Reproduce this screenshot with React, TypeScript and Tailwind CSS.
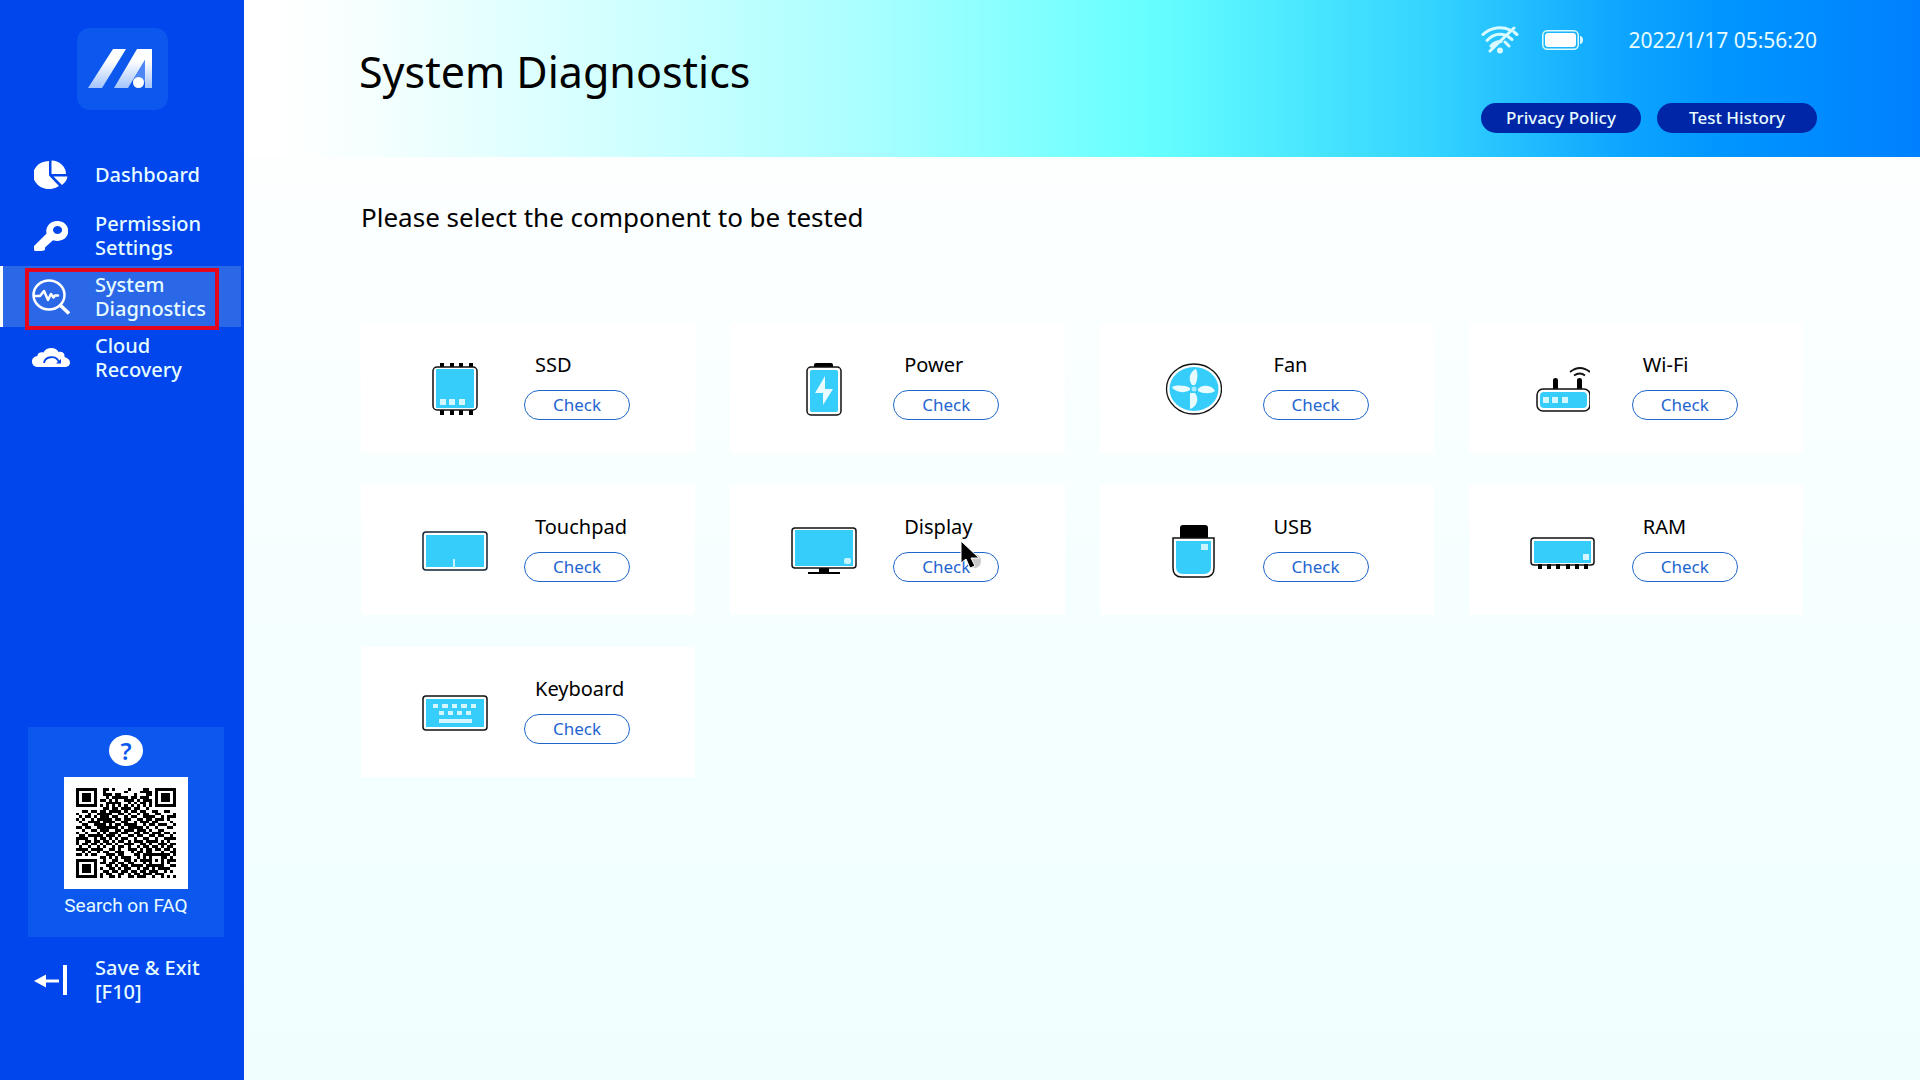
import type { ReactNode } from "react";

const qrRows = [
  "111111100110100001000011001111111",
  "100000100100000010000111101000001",
  "101110100111011000010001101011101",
  "101110100010111110110111001011101",
  "101110101101010011101011101011101",
  "100000100011111001010110101000001",
  "111111101010101010101010101111111",
  "000000000110110111011001000000000",
  "001101101101111010110110011001100",
  "100010011111001101001011001100001",
  "010110101110110010110011110010111",
  "101001011111011011001101101110100",
  "010011110111100110010111011000010",
  "001100111101011011110010110111001",
  "110110011111110101111101001000110",
  "001001101110011011101110100110000",
  "100100010101110110011011011101101",
  "011011111011101001101100110110010",
  "111100101101010110010011001001111",
  "100110110110101101011101111010100",
  "101101101011010011100110100111011",
  "010010010100101101001011011010110",
  "111101111001101001110101101101101",
  "001010010110011100101101100010011",
  "110101100011101100011011111111101",
  "000000001101010111001010100011010",
  "111111100100110011010111101010111",
  "100000101101101101100010100010100",
  "101110100011010110111101111110011",
  "101110101001101011001011010111100",
  "101110100110110110110110111001010",
  "100000101011001101011011101110000",
  "111111101001101001101110010010101",
];

const qrPath = qrRows
  .map((row, y) =>
    row
      .split("")
      .map((cell, x) => (cell === "1" ? `M${x} ${y}h1v1h-1z` : ""))
      .join("")
  )
  .join("");

const BLUE = "#36cdfb";

function Logo() {
  return (
    <svg width="91" height="82" viewBox="0 0 91 82" aria-label="MyASUS">
      <defs>
        <linearGradient id="logo" x1="0" y1="0" x2="0" y2="1">
          <stop offset="0.3" stopColor="#ffffff" />
          <stop offset="1" stopColor="#a3c4fb" />
        </linearGradient>
      </defs>
      <rect width="91" height="82" rx="13" fill="#0c58ef" />
      <path d="M36 21h13L25 60H11z" fill="url(#logo)" />
      <path d="M60 21h15v39h-7V32L51 60H37z" fill="url(#logo)" />
      <path d="M68 32v22L56 52z" fill="#4f86f5" />
      <circle cx="61.500" cy="54.500" r="5.500" fill="#fff" />
    </svg>
  );
}

function DashboardIcon() {
  return (
    <svg width="34" height="30" viewBox="0 0 34 30" fill="#fff">
      <path d="M15 1v14.500L25 26A16 14 0 1 1 15 1z" />
      <path d="M17.500 0.500C26 0.500 32 7 32 14H17.500z" />
      <path d="M19.500 16.500H33.500Q33 21 28 25z" />
    </svg>
  );
}

function KeyIcon() {
  return (
    <svg width="34" height="30" viewBox="0 0 34 30" fill="#fff">
      <path
        fillRule="evenodd"
        d="M23 0a11 10 0 1 1-4 19.200L11 26.500V28q0 1-1 1.500L7 30H1.500Q0 30 0 28.500V25L12.600 12.500A11 10 0 0 1 23 0zM23.500 5a4.500 4 0 1 0 .1 0z"
      />
    </svg>
  );
}

function DiagnosticsIcon() {
  return (
    <svg width="38" height="36" viewBox="0 0 38 36" fill="none" stroke="#fff" strokeWidth="2.500">
      <ellipse cx="17" cy="16" rx="15.500" ry="14.500" />
      <path d="M28 26l9 8.500" strokeWidth="3.500" />
      <path d="M3 17h5l4-5 4 9 3-6 2.500 3.500 1.500-2h3" strokeLinejoin="round" strokeLinecap="round" />
    </svg>
  );
}

function CloudIcon() {
  return (
    <svg width="38" height="20" viewBox="0 0 38 20">
      <path
        d="M6 19C2 19 0 16.500 0 13.500 0 10 2.500 8.500 5.500 8 5 5 9 3.500 11.500 4.500 14-1 24-1.500 26.500 4c4-1 6.500 1.500 6 5 3.500 1 5.500 3 5.500 5.500C38 17.500 35.500 19 33 19z"
        fill="#fff"
      />
      <path d="M12 15c1-7 12-8 15-1" fill="none" stroke="#0647ea" strokeWidth="1.800" />
      <path d="M29 11v4.500h-5z" fill="#0647ea" />
    </svg>
  );
}

function ExitIcon() {
  return (
    <svg width="34" height="30" viewBox="0 0 34 30" fill="#fff">
      <path d="M0 16l12-6.500v5h13v3H12v5z" />
      <path d="M29 0h4v30h-4z" />
    </svg>
  );
}

function WifiOffIcon() {
  return (
    <svg width="38" height="28" viewBox="0 0 38 28" fill="none" stroke="#d9fbff" strokeWidth="3" strokeLinecap="round">
      <path d="M2 8.500C10 1 21 0 29 4" />
      <path d="M6 14.500C11 9 18 7.500 24 9" />
      <path d="M10 20c3-3.500 6.500-4.500 10-4.500M9 25L33 2M33 6l3 2.500M27 10.500l4 3M24 16l4 4" />
      <circle cx="19" cy="24.500" r="1.500" fill="#d9fbff" />
    </svg>
  );
}

function BatteryIcon() {
  return (
    <svg width="42" height="20" viewBox="0 0 42 20">
      <rect x="0.750" y="0.750" width="35.500" height="18.500" rx="4.500" fill="none" stroke="#d9fbff" strokeWidth="1.500" />
      <rect x="3" y="3" width="31" height="14" rx="3" fill="#fff" />
      <path d="M38 6c4 0 4 8 0 8z" fill="#d9fbff" />
    </svg>
  );
}

function SsdIcon() {
  return (
    <svg width="46" height="52" viewBox="0 0 46 52">
      <path d="M8 0h4v52H8zM18 0h4v52h-4zM27 0h4v52h-4zM37 0h4v52h-4z" />
      <rect x="1" y="4" width="44" height="43" rx="4" fill="#fff" stroke="#111" strokeWidth="1.500" />
      <rect x="4" y="6" width="38" height="39" rx="1" fill={BLUE} />
      <path d="M8 36h6v6H8zM17 36h6v6h-6zM27 36h6v6h-6z" fill="#d3f6ff" />
    </svg>
  );
}

function PowerIcon() {
  return (
    <svg width="36" height="54" viewBox="0 0 36 54">
      <path d="M8 6V3q0-2 2-2h15q2 0 2 2v3z" />
      <rect x="1" y="5" width="34" height="48" rx="4" fill="#fff" stroke="#111" strokeWidth="1.500" />
      <rect x="4" y="8" width="28" height="42" rx="2" fill={BLUE} />
      <path d="M19 14v13h8L17 43V31H9z" fill="#e8fbff" />
    </svg>
  );
}

function FanIcon() {
  return (
    <svg width="58" height="52" viewBox="-1 0 58 52">
      <ellipse cx="29" cy="26" rx="27.500" ry="25" fill="#fff" stroke="#111" strokeWidth="1.300" />
      <ellipse cx="29" cy="26" rx="24.500" ry="22" fill={BLUE} />
      <g fill="#e8fbff">
        <path d="M31 6c2 4 2 11-1 16h-3c-4-5-3-13 4-16z" />
        <path d="M50 28c-4 3-12 3-17 0v-2c4-5 14-4 17 2z" />
        <path d="M7 24c4-2 13-2 18 1v2c-6 4-15 2-18-3z" />
        <path d="M25 46V30h5c4 5 3 13-5 16z" />
      </g>
      <circle cx="29" cy="26" r="2.500" fill="#a9ecff" />
    </svg>
  );
}

function RouterIcon() {
  return (
    <svg width="56" height="46" viewBox="-2 0 56 46">
      <path d="M17 24V14q0-2 2.500-2t2.500 2v10zM41 24V14q0-2 2.500-2t2.500 2v10z" />
      <path d="M34 6q10-8 20 0M38 9.500q6-4 11 0" fill="none" stroke="#111" strokeWidth="1.800" />
      <rect x="1" y="23" width="53" height="22" rx="6" fill="#fff" stroke="#111" strokeWidth="1.500" />
      <rect x="4" y="26" width="47" height="16" rx="4" fill={BLUE} />
      <path d="M7 31h6v6H7zM16 31h6v6h-6zM26 31h6v6h-6z" fill="#d3f6ff" />
    </svg>
  );
}

function TouchpadIcon() {
  return (
    <svg width="66" height="40" viewBox="0 0 66 40">
      <rect x="1" y="1" width="64" height="38" rx="3" fill="#fff" stroke="#123" strokeWidth="1.500" />
      <path d="M4 4h58v32H4z" fill={BLUE} />
      <path d="M31 28h2v9h-2z" fill="#c8f4ff" />
    </svg>
  );
}

function DisplayIcon() {
  return (
    <svg width="66" height="48" viewBox="0 0 66 48">
      <path d="M28 40h10v5h11v2H17v-2h11z" />
      <rect x="1" y="1" width="64" height="40" rx="3" fill="#fff" stroke="#111" strokeWidth="1.500" />
      <path d="M4 3h58v36H4z" fill={BLUE} />
      <rect x="53" y="31" width="7" height="6" rx="2" fill="#c8f4ff" />
    </svg>
  );
}

function UsbIcon() {
  return (
    <svg width="44" height="54" viewBox="-1 0 44 54">
      <path d="M8 15V4q0-3 3-3h22q3 0 3 3v11z" />
      <path d="M1 14h41v30q0 9-9 9H10q-9 0-9-9z" fill="#fff" stroke="#111" strokeWidth="1.500" />
      <path d="M4 17h35v26q0 7-7 7H11q-7 0-7-7z" fill={BLUE} />
      <path d="M29 20h7v6h-7z" fill="#c8f4ff" />
    </svg>
  );
}

function RamIcon() {
  return (
    <svg width="66" height="36" viewBox="-1 -4 66 36">
      <rect x="1" y="1" width="63" height="27" rx="3" fill="#fff" stroke="#111" strokeWidth="1.500" />
      <path d="M4 4h57v22H4z" fill={BLUE} />
      <rect x="53" y="17" width="6" height="6" fill="#d3f6ff" />
      <path d="M8 27h4v5H8zM17 27h4v5h-4zM26 27h4v5h-4zM36 27h4v5h-4zM45 27h4v5h-4zM54 27h4v5h-4z" />
    </svg>
  );
}

function KeyboardIcon() {
  return (
    <svg width="66" height="36" viewBox="0 0 66 36">
      <rect x="1" y="1" width="64" height="34" rx="3" fill="#fff" stroke="#111" strokeWidth="1.500" />
      <path d="M4 4h58v28H4z" fill={BLUE} />
      <path
        d="M11 9h5v4h-5zM20 9h6v4h-6zM30 9h5v4h-5zM39 9h6v4h-6zM49 9h5v4h-5zM17 16h5v4h-5zM26 16h5v4h-5zM35 16h5v4h-5zM44 16h5v4h-5zM17 24h33v4H17z"
        fill="#d3f6ff"
      />
    </svg>
  );
}

function Cursor() {
  return (
    <svg width="24" height="32" viewBox="0 0 24 32" className="pointer-events-none absolute top-[55px] left-[230px]">
      <ellipse cx="15" cy="21" rx="6" ry="7" fill="#777" opacity="0.400" />
      <path d="M1 1v22l5-4 4 9 5-2-4-8h8z" fill="#000" stroke="#fff" strokeWidth="1" />
    </svg>
  );
}

const navItems: { label: string; icon: ReactNode; active?: boolean }[] = [
  { label: "Dashboard", icon: <DashboardIcon /> },
  { label: "Permission Settings", icon: <KeyIcon /> },
  { label: "System Diagnostics", icon: <DiagnosticsIcon />, active: true },
  { label: "Cloud Recovery", icon: <CloudIcon /> },
];

const components: { name: string; icon: ReactNode }[] = [
  { name: "SSD", icon: <SsdIcon /> },
  { name: "Power", icon: <PowerIcon /> },
  { name: "Fan", icon: <FanIcon /> },
  { name: "Wi-Fi", icon: <RouterIcon /> },
  { name: "Touchpad", icon: <TouchpadIcon /> },
  { name: "Display", icon: <DisplayIcon /> },
  { name: "USB", icon: <UsbIcon /> },
  { name: "RAM", icon: <RamIcon /> },
  { name: "Keyboard", icon: <KeyboardIcon /> },
];

function Sidebar() {
  return (
    <aside className="flex w-[244px] shrink-0 flex-col bg-[#0046ec] pt-7 pb-[75px] text-[#e6fcff]">
      <div className="pl-[77px]">
        <Logo />
      </div>

      <nav className="mt-[34px]">
        {navItems.map((item) => (
          <a
            key={item.label}
            href="#"
            className={
              item.active
                ? "relative mr-[3px] flex h-[61px] items-center border-l-3 border-white bg-[#2a68e8] pl-[29px]"
                : "flex h-[61px] items-center pl-8"
            }
          >
            <span className="flex w-[38px] justify-center">{item.icon}</span>
            <span className="ml-[25px] w-[120px] text-xl leading-6 font-medium">{item.label}</span>
            {item.active && (
              <span className="absolute top-[2px] left-[22px] h-[62px] w-[194px] border-4 border-[#e3061c]" />
            )}
          </a>
        ))}
      </nav>

      <div className="mt-auto mr-5 ml-7 flex h-[210px] flex-col items-center bg-[#0c58ef] pt-2">
        <button
          aria-label="Help"
          className="flex h-[31px] w-[34px] items-center justify-center rounded-[50%] bg-white text-2xl font-semibold text-[#0c58ef]"
        >
          ?
        </button>
        <div className="mt-[11px] flex h-[112px] w-[124px] items-center justify-center bg-white">
          <svg
            width="100"
            height="90"
            viewBox="0 0 33 33"
            preserveAspectRatio="none"
            shapeRendering="crispEdges"
            aria-label="FAQ QR code"
          >
            <path d={qrPath} />
          </svg>
        </div>
        <p className="mt-[5px] font-[Roboto] text-[19px] leading-6">Search on FAQ</p>
      </div>

      <a href="#" className="mt-[18px] flex h-[50px] items-center pl-8">
        <span className="flex w-[38px] justify-center">
          <ExitIcon />
        </span>
        <span className="ml-[25px] w-[120px] text-xl leading-6 font-medium">Save &amp; Exit [F10]</span>
      </a>
    </aside>
  );
}

export default function App() {
  return (
    <div className="flex min-h-screen bg-white font-['Noto_Sans',sans-serif] text-black">
      <Sidebar />

      <div className="flex min-w-0 flex-1 flex-col">
        <header className="flex h-[157px] justify-between bg-[linear-gradient(90deg,#ffffff_2%,#f4fffe_8%,#c8ffff_26%,#aaffff_37%,#66ffff_54%,#33d3ff_71%,#0ea6ff_82%,#0096ff_88%,#0080ff_100%)] pr-[103px] pl-[115px]">
          <h1 className="pt-[46px] text-[43px] leading-[52px]">System Diagnostics</h1>
          <div className="flex w-[336px] flex-col pt-6 text-[#e6fcff]">
            <div className="flex h-8 items-center">
              <WifiOffIcon />
              <span className="ml-[23px]">
                <BatteryIcon />
              </span>
              <span className="ml-auto text-[21px] leading-8">2022/1/17 05:56:20</span>
            </div>
            <div className="mt-[47px] flex gap-4">
              <button className="h-[30px] flex-1 rounded-full bg-[#0026a8] text-[17px] font-medium">Privacy Policy</button>
              <button className="h-[30px] flex-1 rounded-full bg-[#0026a8] text-[17px] font-medium">Test History</button>
            </div>
          </div>
        </header>

        <main className="flex-1 bg-linear-to-b from-[#fdffff] via-[#f5ffff] to-[#f0fffe] px-[117px] pt-11">
          <h2 className="text-[26px] leading-8">Please select the component to be tested</h2>

          <div className="mt-[90px] grid grid-cols-4 gap-x-[35px] gap-y-8">
            {components.map((item) => (
              <section key={item.name} className="relative flex h-[130px] bg-white">
                <div className="flex w-[163px] items-center justify-center pt-[2px] pl-6">{item.icon}</div>
                <div className="flex flex-col pt-7">
                  <h3 className="pl-[11px] text-xl leading-7">{item.name}</h3>
                  <button className="mt-[11px] h-[30px] w-[106px] rounded-full border border-[#1f66c8] text-[17px] leading-7 text-[#1f66d0]">
                    Check
                  </button>
                </div>
                {item.name === "Display" && <Cursor />}
              </section>
            ))}
          </div>
        </main>
      </div>
    </div>
  );
}
